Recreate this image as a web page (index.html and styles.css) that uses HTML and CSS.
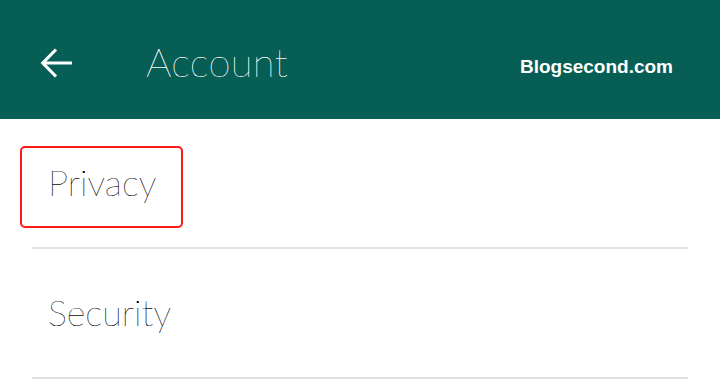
FILE: index.html
```html
<!DOCTYPE html>
<html>
<head>
<meta charset="utf-8">
<link rel="stylesheet" href="styles.css">
</head>
<body>
<header class="appbar">
  <svg class="back" viewBox="0 0 34 34" width="34" height="34" aria-hidden="true">
    <path d="M32 17 H4 M16 3.5 L2.8 17 L16 30.5" fill="none" stroke="#ffffff" stroke-width="3.2" stroke-linejoin="miter"/>
  </svg>
  <h1 class="title">Account</h1>
  <span class="brand">Blogsecond.com</span>
</header>
<main class="list">
  <div class="item">
    <span class="label highlight">Privacy</span>
  </div>
  <div class="item item-second">
    <span class="label">Security</span>
  </div>
</main>
</body>
</html>
```
FILE: styles.css
```css
html, body {
  margin: 0;
  padding: 0;
  background: #ffffff;
}
body {
  width: 720px;
  height: 379px;
  overflow: hidden;
  font-family: "Lato", "Noto Sans", sans-serif;
}
.appbar {
  height: 119px;
  background: #075e54;
  display: flex;
  align-items: flex-start;
  padding: 0 47px 0 40px;
  box-sizing: border-box;
  color: #ffffff;
}
.back {
  margin-top: 46px;
  flex: none;
}
.title {
  margin: 38px 0 0 72px;
  font-weight: 100;
  font-size: 40px;
  line-height: 48px;
  letter-spacing: 0.3px;
  color: #ffffff;
  text-shadow: 0 0 0.5px #ffffff;
}
.brand {
  margin-left: auto;
  margin-top: 56px;
  font-family: "Liberation Sans", Arial, sans-serif;
  font-weight: bold;
  font-size: 19px;
  line-height: 22px;
}
.list {
  padding: 0 32px;
}
.item {
  height: 128px;
  border-bottom: 2px solid #e0e0e0;
}
.label {
  display: inline-block;
  font-weight: 100;
  font-size: 36px;
  line-height: 46px;
  color: #000000;
  text-shadow: 0 0 0.4px #333333;
}
.highlight {
  margin: 27px 0 0 -12px;
  padding: 11px 0 21px 26px;
  width: 163px;
  box-sizing: border-box;
  border: 2px solid #ff1a1a;
  border-radius: 5px;
}
.item-second .label {
  margin: 40px 0 0 16px;
}
```
